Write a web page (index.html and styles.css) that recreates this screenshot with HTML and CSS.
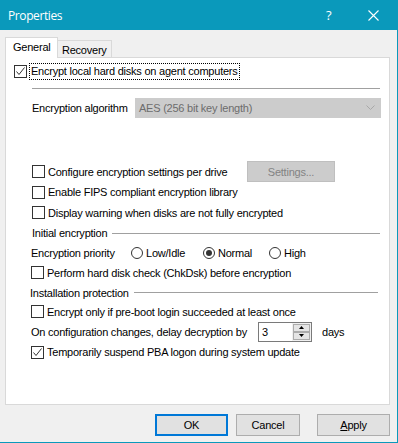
FILE: index.html
```html
<!DOCTYPE html>
<html lang="en">
<head>
  <meta charset="UTF-8" />
  <title>Properties</title>
  <link rel="stylesheet" href="styles.css">
</head>
<body>
  <div class="window">
    <div class="titlebar">
      <span class="title">Properties</span>
      <span class="help">?</span>
      <span class="close">
        <svg width="11" height="11" viewBox="0 0 11 11"><path d="M0.5 0.5 L10.5 10.5 M10.5 0.5 L0.5 10.5" stroke="#fff" stroke-width="1.1" fill="none"/></svg>
      </span>
    </div>

    <div class="tabs">
      <div class="tab active">General</div>
      <div class="tab">Recovery</div>
    </div>

    <div class="page">
      <div class="row row-main">
        <span class="box"><svg width="11" height="11" viewBox="0 0 11 11"><path d="M1.5 5.5 L4 8.5 L9.5 1.5" stroke="#333" stroke-width="1" fill="none"/></svg></span>
        <span class="focus">Encrypt local hard disks on agent computers</span>
      </div>
      <div class="rule"></div>

      <div class="row row-algo">
        <span class="algo-label">Encryption algorithm</span>
        <div class="combo">
          <span>AES (256 bit key length)</span>
          <svg width="9" height="6" viewBox="0 0 9 6"><path d="M0.5 0.5 L4.5 4.5 L8.5 0.5" stroke="#a8a8a8" fill="none"/></svg>
        </div>
      </div>

      <div class="row row-upper row-config">
        <label class="check config-label"><span class="box"></span>Configure encryption settings per drive</label>
        <div class="btn-disabled">Settings...</div>
      </div>
      <div class="row row-upper h20">
        <label class="check"><span class="box"></span>Enable FIPS compliant encryption library</label>
      </div>
      <div class="row row-upper h21">
        <label class="check"><span class="box"></span>Display warning when disks are not fully encrypted</label>
      </div>

      <div class="row group group-initial h20">
        <span>Initial encryption</span>
        <span class="group-line"></span>
      </div>
      <div class="row row-lower h19">
        <span class="prio-label">Encryption priority</span>
        <label class="radio r-low"><span class="dot"></span>Low/Idle</label>
        <label class="radio r-normal"><span class="dot on"></span>Normal</label>
        <label class="radio"><span class="dot"></span>High</label>
      </div>
      <div class="row row-lower h21">
        <label class="check"><span class="box"></span>Perform hard disk check (ChkDsk) before encryption</label>
      </div>

      <div class="row group group-install h19">
        <span>Installation protection</span>
        <span class="group-line"></span>
      </div>
      <div class="row row-lower h19">
        <label class="check"><span class="box"></span>Encrypt only if pre-boot login succeeded at least once</label>
      </div>
      <div class="row row-lower h21">
        <span class="delay-label">On configuration changes, delay decryption by</span>
        <div class="numeric">
          <span class="num-value">3</span>
          <div class="spin">
            <span class="spin-btn"><svg width="5" height="3" viewBox="0 0 5 3"><path d="M2.5 0 L5 3 L0 3 Z" fill="#000"/></svg></span>
            <span class="spin-btn"><svg width="5" height="3" viewBox="0 0 5 3"><path d="M0 0 L5 0 L2.5 3 Z" fill="#000"/></svg></span>
          </div>
        </div>
        <span class="days">days</span>
      </div>
      <div class="row row-lower h20">
        <label class="check"><span class="box"><svg width="11" height="11" viewBox="0 0 11 11"><path d="M1.5 5.5 L4 8.5 L9.5 1.5" stroke="#333" stroke-width="1" fill="none"/></svg></span>Temporarily suspend PBA logon during system update</label>
      </div>
    </div>

    <div class="buttons">
      <button class="btn btn-ok">OK</button>
      <button class="btn btn-cancel">Cancel</button>
      <button class="btn btn-apply"><u>A</u>pply</button>
    </div>
  </div>
</body>
</html>
```

FILE: styles.css
```css
html, body {
  margin: 0;
  padding: 0;
}
body {
  font-family: "Liberation Sans", Arial, sans-serif;
  font-size: 11px;
  letter-spacing: -0.23px;
  color: #000;
  background: #f0f0f0;
}
.window {
  width: 398px;
  height: 443px;
  box-sizing: border-box;
  background: #f0f0f0;
  border-right: 1px solid #0a99bb;
  border-bottom: 1px solid #0a99bb;
  overflow: hidden;
}
.titlebar {
  height: 30px;
  background: #0a99bb;
  color: white;
  display: flex;
  align-items: center;
  font-family: "Open Sans", "Noto Sans", sans-serif;
  font-size: 12px;
  letter-spacing: -0.4px;
}
.title {
  margin-left: 8px;
  flex: 1;
}
.help {
  font-size: 13px;
  width: 6px;
}
.close {
  display: flex;
  margin-left: 36px;
  margin-right: 18px;
}

/* tabs */
.tabs {
  display: flex;
  align-items: flex-end;
  margin: 7px 0 0 5px;
  height: 20px;
}
.tab {
  box-sizing: border-box;
  border: 1px solid #d9d9d9;
  border-bottom: none;
  padding-left: 5px;
}
.tab.active {
  width: 53px;
  height: 21px;
  background: #fff;
  line-height: 19px;
  padding-left: 7px;
  position: relative;
  z-index: 1;
  margin-bottom: -1px;
}
.tab:not(.active) {
  width: 54px;
  height: 17px;
  line-height: 19px;
  border-left: none;
  padding-left: 4px;
}
.page {
  margin-left: 5px;
  width: 385px;
  height: 348px;
  box-sizing: border-box;
  background: #fff;
  border: 1px solid #d9d9d9;
  display: flex;
  flex-direction: column;
}

/* rows */
.row {
  display: flex;
  align-items: center;
}
.h19 { height: 19px; }
.h20 { height: 20px; }
.h21 { height: 21px; }
.row-main {
  height: 17px;
  margin-top: 5px;
  padding-left: 8px;
}
.row-main .box {
  margin-right: 2px;
}
.focus {
  border: 1px dotted #000;
  padding: 0 1px;
  line-height: 15px;
}
.rule {
  height: 1px;
  background: #a0a0a0;
  margin: 8px 9px 0 26px;
}
.row-algo {
  height: 20px;
  margin-top: 9px;
  padding-left: 26px;
}
.algo-label {
  width: 103px;
}
.combo {
  width: 246px;
  height: 20px;
  box-sizing: border-box;
  background: #cccccc;
  border: 1px solid #cccccc;
  color: #6d6d6d;
  display: flex;
  align-items: center;
  justify-content: space-between;
  padding: 0 5px 0 3px;
}
.row-upper {
  padding-left: 26px;
}
.row-config {
  height: 21px;
  margin-top: 43px;
}
.config-label {
  width: 215px;
}
.btn-disabled {
  width: 88px;
  height: 21px;
  box-sizing: border-box;
  background: #cccccc;
  border: 1px solid #bfbfbf;
  color: #838383;
  display: flex;
  align-items: center;
  justify-content: center;
}
.row-lower {
  padding-left: 25px;
}

/* checkbox and radio */
.check {
  display: flex;
  align-items: center;
}
.box {
  width: 13px;
  height: 13px;
  box-sizing: border-box;
  border: 1px solid #333;
  background: #fff;
  margin-right: 3px;
  display: flex;
}
.radio {
  display: flex;
  align-items: center;
}
.dot {
  width: 12px;
  height: 12px;
  box-sizing: border-box;
  border: 1px solid #333;
  border-radius: 50%;
  margin-right: 3px;
  display: flex;
  align-items: center;
  justify-content: center;
}
.dot.on::after {
  content: "";
  width: 6px;
  height: 6px;
  border-radius: 50%;
  background: #333;
}
.prio-label {
  width: 100px;
}
.r-low {
  width: 72px;
}
.r-normal {
  width: 66px;
}

/* group headers */
.group {
  padding-left: 26px;
  padding-right: 9px;
}
.group-install {
  padding-left: 24px;
  padding-right: 11px;
}
.group-line {
  flex: 1;
  height: 1px;
  background: #a0a0a0;
  margin-left: 5px;
}

/* numeric up down */
.delay-label {
  width: 227px;
}
.numeric {
  width: 54px;
  height: 20px;
  box-sizing: border-box;
  border: 1px solid #7a7a7a;
  display: flex;
  background: #fff;
}
.num-value {
  flex: 1;
  padding-left: 3px;
  line-height: 18px;
}
.spin {
  width: 17px;
  display: flex;
  flex-direction: column;
  background: #f0f0f0;
  padding: 1px;
}
.spin-btn {
  flex: 1;
  box-sizing: border-box;
  border: 1px solid #acacac;
  background: #e5e5e5;
  display: flex;
  align-items: center;
  justify-content: center;
}
.days {
  margin-left: 10px;
}

/* dialog buttons */
.buttons {
  display: flex;
  margin-top: 9px;
  padding-left: 155px;
}
.btn {
  height: 22px;
  box-sizing: border-box;
  background: #e1e1e1;
  border: 1px solid #adadad;
  font-family: "Liberation Sans", Arial, sans-serif;
  font-size: 11px;
  letter-spacing: -0.23px;
  color: #000;
  padding: 0;
  margin: 0;
}
.btn-ok {
  width: 73px;
  border: 2px solid #0078d7;
}
.btn-cancel {
  width: 64px;
  margin-left: 8px;
}
.btn-apply {
  width: 73px;
  margin-left: 17px;
}
```
